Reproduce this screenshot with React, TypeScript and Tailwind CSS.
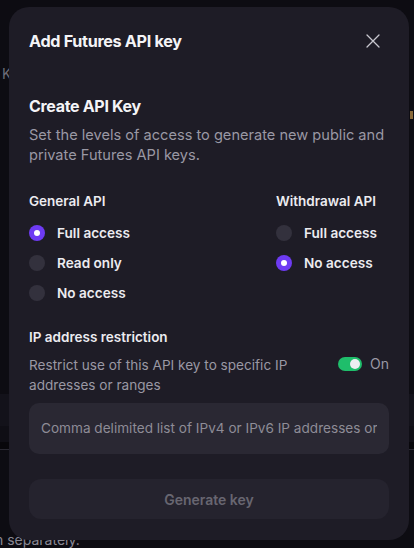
import React from "react";

function Radio({ on }: { on?: boolean }) {
  return on ? (
    <span className="flex h-4 w-4 items-center justify-center rounded-full bg-[#6e3bf3]">
      <span className="h-[6px] w-[6px] rounded-full bg-white" />
    </span>
  ) : (
    <span className="h-4 w-4 rounded-full bg-[#33313d]" />
  );
}

function Option({ label, on }: { label: string; on?: boolean }) {
  return (
    <div className="flex h-5 items-center gap-3">
      <Radio on={on} />
      <span className="text-[13.6px] font-semibold text-[#ecebf0]">{label}</span>
    </div>
  );
}

export default function App() {
  return (
    <div
      className="relative h-[548px] w-[414px] overflow-hidden bg-[#0d0c12]"
      style={{ fontFamily: "Inter, 'Noto Sans', sans-serif" }}
    >
      {/* backdrop page content */}
      <div className="flex h-full flex-col">
        <div className="h-[66px]" />
        <div className="pl-[2px] text-[14px] leading-[16px] text-[#6d6c78]">K</div>
        <div className="flex-1" />
        <div className="h-[32px] bg-[#13121a]" />
        <div className="h-[16px] bg-[#0f0e15]" />
        <div className="h-[7px] bg-[#08070b]" />
        <div className="h-px bg-[#2a2932]" />
        <div className="h-[82px]" />
        <div className="-ml-[5px] text-[14px] leading-[16px] text-[#8a8994]">n separately.</div>
      </div>
      <div className="absolute left-[410px] top-[111px] h-[8px] w-[3px] bg-[#8a6a3a]" />

      {/* modal */}
      <div className="absolute left-[9px] top-[7px] flex h-[533px] w-[400px] flex-col rounded-[20px] bg-[#1e1c26] px-5 pt-[22px]">
        <div className="flex h-6 items-center justify-between">
          <h2 className="text-[16.2px] font-bold tracking-[-0.02em] text-[#f4f4f7]">Add Futures API key</h2>
          <svg width="14" height="14" viewBox="0 0 14 14" className="mr-[9px]">
            <path d="M1 1L13 13M13 1L1 13" stroke="#c8c7cf" strokeWidth="1.3" strokeLinecap="round" />
          </svg>
        </div>

        <h3 className="mt-[41px] text-[16px] font-bold leading-6 tracking-[-0.02em] text-[#f4f4f7]">Create API Key</h3>
        <p className="-mr-[12px] mt-[7px] text-[14.6px] leading-5 text-[#9a98a4]">
          Set the levels of access to generate new public and private Futures API keys.
        </p>

        <div className="mt-[26px] flex">
          <div className="w-[247px]">
            <div className="text-[13.5px] font-semibold leading-5 text-[#ecebf0]">General API</div>
            <div className="mt-3 flex flex-col gap-[10px]">
              <Option label="Full access" on />
              <Option label="Read only" />
              <Option label="No access" />
            </div>
          </div>
          <div>
            <div className="text-[13.5px] font-semibold leading-5 text-[#ecebf0]">Withdrawal API</div>
            <div className="mt-3 flex flex-col gap-[10px]">
              <Option label="Full access" />
              <Option label="No access" on />
            </div>
          </div>
        </div>

        <div className="mt-[24px] text-[13.5px] font-semibold leading-5 text-[#ecebf0]">IP address restriction</div>
        <div className="mt-2 flex items-start justify-between">
          <p className="w-[270px] text-[13.6px] leading-5 text-[#9a98a4]">
            Restrict use of this API key to specific IP addresses or ranges
          </p>
          <div className="mt-[-1px] flex items-center gap-2">
            <span className="flex h-[14px] w-6 items-center justify-end rounded-full bg-[#1fbe6b] pr-[2px]">
              <span className="h-[10px] w-[10px] rounded-full bg-[#eeeef2]" />
            </span>
            <span className="text-[14px] leading-5 text-[#9a98a4]">On</span>
          </div>
        </div>

        <div className="mt-2 flex h-[51px] items-center rounded-[10px] bg-[#2a2833] px-3">
          <span className="block w-full overflow-hidden whitespace-nowrap text-[13.6px] text-[#8e8c97]">
            Comma delimited list of IPv4 or IPv6 IP addresses or ranges
          </span>
        </div>

        <button className="mt-[25px] h-10 rounded-[12px] bg-[#25232e] text-[14px] font-semibold text-[#686671]">
          Generate key
        </button>
      </div>
    </div>
  );
}
